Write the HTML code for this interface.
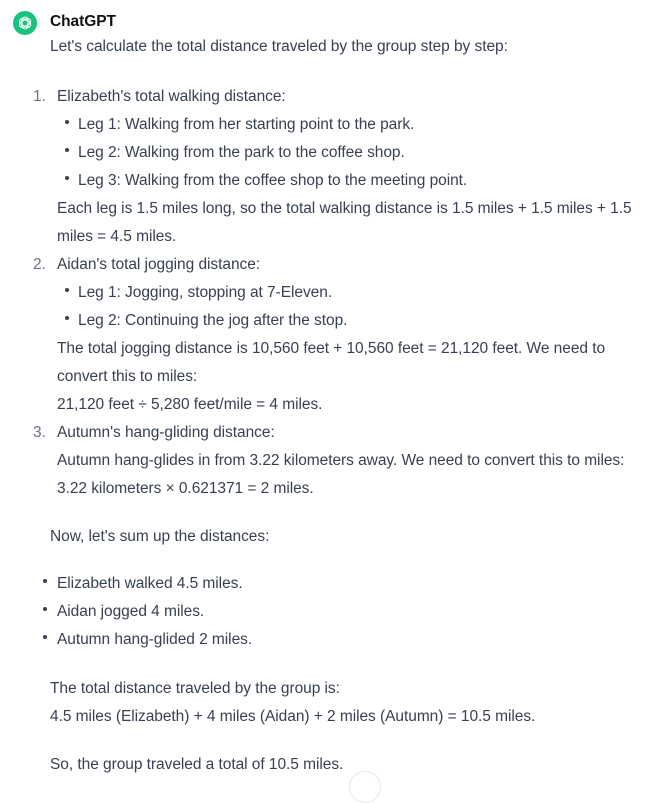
<!DOCTYPE html>
<html><head><meta charset="utf-8"><style>
body{margin:0;width:667px;height:779px;background:#fff;overflow:hidden;position:relative;font-family:"Liberation Sans",sans-serif;color:#374151;font-size:15.5px;letter-spacing:-0.05px}
.l{position:absolute;line-height:28px;white-space:nowrap}
.n{color:#6b7280}
.b{position:absolute;width:4px;height:4px;border-radius:50%;background:#374151}
</style></head><body>
<svg style="position:absolute;left:13px;top:11px" width="24" height="24" viewBox="0 0 24 24"><circle cx="12" cy="12" r="12" fill="#19c37d"/><g fill="none" stroke="#fff" stroke-width="1.1"><rect x="9" y="6" width="6" height="12" rx="3"/><rect x="9" y="6" width="6" height="12" rx="3" transform="rotate(60 12 12)"/><rect x="9" y="6" width="6" height="12" rx="3" transform="rotate(120 12 12)"/></g></svg>
<div class="l" style="left:50px;top:8px;font-weight:bold;color:#111">ChatGPT</div>
<div class="l" style="left:50px;top:33px">Let's calculate the total distance traveled by the group step by step:</div>

<div class="l n" style="left:33px;top:83px">1.</div>
<div class="l" style="left:57px;top:83px">Elizabeth's total walking distance:</div>
<div class="b" style="left:65px;top:120px"></div><div class="l" style="left:78px;top:111px">Leg 1: Walking from her starting point to the park.</div>
<div class="b" style="left:65px;top:148px"></div><div class="l" style="left:78px;top:139px">Leg 2: Walking from the park to the coffee shop.</div>
<div class="b" style="left:65px;top:176px"></div><div class="l" style="left:78px;top:167px">Leg 3: Walking from the coffee shop to the meeting point.</div>
<div class="l" style="left:57px;top:195px">Each leg is 1.5 miles long, so the total walking distance is 1.5 miles + 1.5 miles + 1.5</div>
<div class="l" style="left:57px;top:223px">miles = 4.5 miles.</div>

<div class="l n" style="left:33px;top:251px">2.</div>
<div class="l" style="left:57px;top:251px">Aidan's total jogging distance:</div>
<div class="b" style="left:65px;top:288px"></div><div class="l" style="left:78px;top:279px">Leg 1: Jogging, stopping at 7-Eleven.</div>
<div class="b" style="left:65px;top:316px"></div><div class="l" style="left:78px;top:307px">Leg 2: Continuing the jog after the stop.</div>
<div class="l" style="left:57px;top:335px">The total jogging distance is 10,560 feet + 10,560 feet = 21,120 feet. We need to</div>
<div class="l" style="left:57px;top:363px">convert this to miles:</div>
<div class="l" style="left:57px;top:391px">21,120 feet ÷ 5,280 feet/mile = 4 miles.</div>

<div class="l n" style="left:33px;top:419px">3.</div>
<div class="l" style="left:57px;top:419px">Autumn's hang-gliding distance:</div>
<div class="l" style="left:57px;top:447px">Autumn hang-glides in from 3.22 kilometers away. We need to convert this to miles:</div>
<div class="l" style="left:57px;top:475px">3.22 kilometers × 0.621371 = 2 miles.</div>

<div class="l" style="left:50px;top:523px">Now, let's sum up the distances:</div>
<div class="b" style="left:43px;top:579px"></div><div class="l" style="left:57px;top:570px">Elizabeth walked 4.5 miles.</div>
<div class="b" style="left:43px;top:607px"></div><div class="l" style="left:57px;top:598px">Aidan jogged 4 miles.</div>
<div class="b" style="left:43px;top:635px"></div><div class="l" style="left:57px;top:626px">Autumn hang-glided 2 miles.</div>

<div class="l" style="left:50px;top:675px">The total distance traveled by the group is:</div>
<div class="l" style="left:50px;top:703px">4.5 miles (Elizabeth) + 4 miles (Aidan) + 2 miles (Autumn) = 10.5 miles.</div>
<div class="l" style="left:50px;top:751px">So, the group traveled a total of 10.5 miles.</div>
<div style="position:absolute;left:349px;top:771px;width:30px;height:30px;border:1px solid #e5e7eb;border-radius:50%;background:#fff"></div>
</body></html>
